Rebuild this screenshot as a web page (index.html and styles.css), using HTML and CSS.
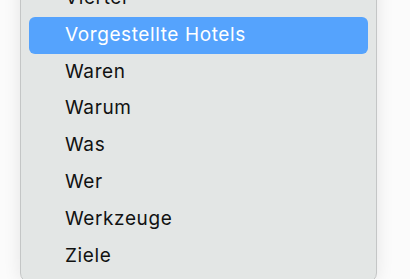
FILE: index.html
```html
<!DOCTYPE html>
<html lang="de">
<head>
<meta charset="utf-8">
<link rel="stylesheet" href="styles.css">
</head>
<body>
<div class="menu">
  <div class="item">Vierter</div>
  <div class="item selected">Vorgestellte Hotels</div>
  <div class="item">Waren</div>
  <div class="item">Warum</div>
  <div class="item">Was</div>
  <div class="item">Wer</div>
  <div class="item">Werkzeuge</div>
  <div class="item">Ziele</div>
</div>
</body>
</html>
```
FILE: styles.css
```css
html, body {
  margin: 0;
  padding: 0;
  background: #fbfbfb;
  overflow: hidden;
  height: 279px;
}
.menu {
  margin-top: -26px;
  margin-left: 20px;
  width: 339px;
  padding: 5px 8px 8px 8px;
  background: #e3e6e5;
  border: 1px solid #c4c6c6;
  border-radius: 10px;
  box-shadow: 0 0 18px rgba(0, 0, 0, 0.09);
  font-family: Inter, "Noto Sans", sans-serif;
  font-size: 19px;
  font-weight: 400;
  letter-spacing: 0.6px;
  color: #111212;
}
.item {
  height: 36.8px;
  line-height: 36.8px;
  padding-left: 36px;
  border-radius: 6px;
  white-space: nowrap;
}
.selected {
  background: #55a3fd;
  color: #ffffff;
}
```
